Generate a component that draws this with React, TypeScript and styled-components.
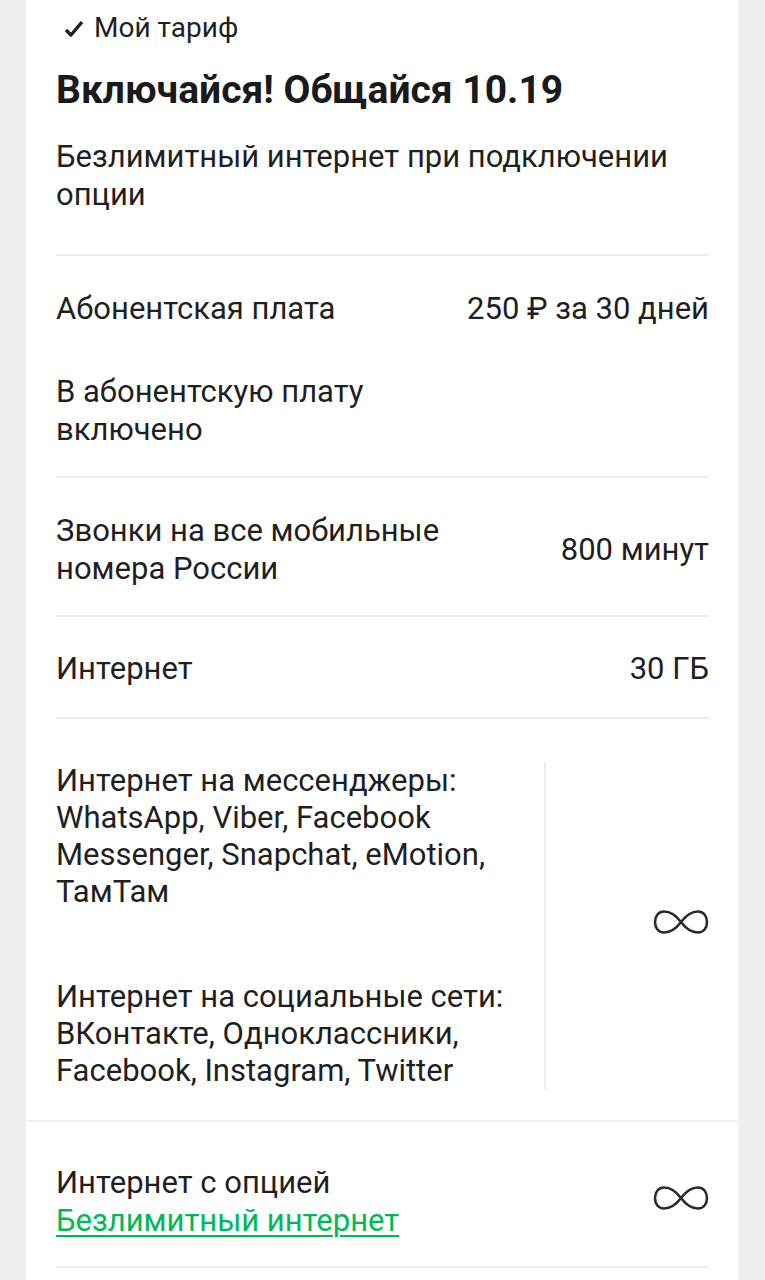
import * as React from 'react';
import styled, { createGlobalStyle } from 'styled-components';

const GlobalStyle = createGlobalStyle`
  html, body {
    margin: 0;
    padding: 0;
    background: #efefef;
  }
  body {
    font-family: Roboto, 'Noto Sans', 'Liberation Sans', sans-serif;
    color: #1f1f1f;
    -webkit-font-smoothing: antialiased;
  }
`;

const Infinity: React.FC = () => (
  <StyledInfinity width='56' height='26' viewBox='0 0 56 26' fill='none'>
    <path
      d='M28 13 C22 5 16 2.5 11 2.5 C5.5 2.5 2 7 2 13 C2 19 5.5 23.5 11 23.5 C16 23.5 22 21 28 13 C34 5 40 2.5 45 2.5 C50.5 2.5 54 7 54 13 C54 19 50.5 23.5 45 23.5 C40 23.5 34 21 28 13 Z'
      stroke='#2b2b2b'
      strokeWidth='2.6'
    />
  </StyledInfinity>
);

const CheckIcon: React.FC = () => (
  <svg width='20' height='18' viewBox='0 0 20 18' fill='none'>
    <path d='M2 10 L7 15 L18 2' stroke='#1f1f1f' strokeWidth='3.4' strokeLinejoin='round' />
  </svg>
);

const App: React.FC = () => {
  return (
    <>
      <GlobalStyle />
      <StyledPage>
        <StyledCard>
          <StyledBadge>
            <CheckIcon />
            <span>Мой тариф</span>
          </StyledBadge>
          <StyledTitle>Включайся! Общайся 10.19</StyledTitle>
          <StyledDescription>
            Безлимитный интернет при подключении опции
          </StyledDescription>

          <StyledDivider />

          <StyledRow padTop={34} padBottom={0}>
            <StyledLabel>Абонентская плата</StyledLabel>
            <StyledValue>250 ₽ за 30 дней</StyledValue>
          </StyledRow>
          <StyledRow padTop={45} padBottom={27}>
            <StyledLabel narrow>В абонентскую плату включено</StyledLabel>
          </StyledRow>

          <StyledDivider />

          <StyledRow padTop={34} padBottom={27}>
            <StyledLabel narrow>Звонки на все мобильные номера России</StyledLabel>
            <StyledValue>800 минут</StyledValue>
          </StyledRow>

          <StyledDivider />

          <StyledRow padTop={33} padBottom={29}>
            <StyledLabel>Интернет</StyledLabel>
            <StyledValue>30 ГБ</StyledValue>
          </StyledRow>

          <StyledDivider />

          <StyledSplitRow>
            <StyledSplitLeft>
              <StyledParagraph>
                Интернет на мессенджеры: WhatsApp, Viber, Facebook Messenger,
                Snapchat, eMotion, ТамТам
              </StyledParagraph>
              <StyledParagraph>
                Интернет на социальные сети: ВКонтакте, Одноклассники,
                Facebook, Instagram, Twitter
              </StyledParagraph>
            </StyledSplitLeft>
            <StyledSplitRight>
              <Infinity />
            </StyledSplitRight>
          </StyledSplitRow>
        </StyledCard>

        <StyledCard>
          <StyledRow padTop={42} padBottom={26}>
            <div>
              <StyledLabel>Интернет с опцией</StyledLabel>
              <StyledLink href='#'>Безлимитный интернет</StyledLink>
            </div>
            <Infinity />
          </StyledRow>
          <StyledDivider />
          <StyledTail />
        </StyledCard>
      </StyledPage>
    </>
  );
};

export default App;

const StyledPage = styled.div`
  width: 712px;
  margin: 0 0 0 26px;
  display: flex;
  flex-direction: column;
  gap: 2px;
`;
const StyledCard = styled.div`
  background: #ffffff;
  padding: 0 29px 0 30px;
`;
const StyledInfinity = styled.svg`
  margin-bottom: 8px;
`;
const StyledBadge = styled.div`
  display: flex;
  align-items: center;
  gap: 10px;
  padding: 9px 0 0 8px;
  height: 38px;
  font-size: 28px;
  line-height: 38px;
  color: #1f1f1f;
  svg {
    margin-top: 1px;
  }
`;
const StyledTitle = styled.h1`
  margin: 20px 0 0;
  font-size: 39px;
  font-weight: 700;
  line-height: 46px;
  color: #1a1a1a;
`;
const StyledDescription = styled.p`
  margin: 25px 0 0;
  max-width: 654px;
  font-size: 31px;
  line-height: 38px;
  padding-bottom: 40px;
`;
const StyledDivider = styled.div`
  height: 2px;
  background: #ededed;
`;
const StyledRow = styled.div<{ padTop: number; padBottom: number }>`
  display: flex;
  align-items: center;
  justify-content: space-between;
  padding: ${(p) => p.padTop}px 0 ${(p) => p.padBottom}px;
`;
const StyledLabel = styled.div<{ narrow?: boolean }>`
  font-size: 31px;
  line-height: 38px;
  max-width: ${(p) => (p.narrow ? '440px' : 'none')};
`;
const StyledValue = styled.div`
  font-size: 31px;
  line-height: 38px;
  text-align: right;
  white-space: nowrap;
`;
const StyledSplitRow = styled.div`
  display: flex;
  padding: 43px 0 31px;
`;
const StyledSplitLeft = styled.div`
  width: 488px;
  display: flex;
  flex-direction: column;
  gap: 68px;
`;
const StyledParagraph = styled.p`
  margin: 0;
  font-size: 31px;
  line-height: 37px;
  max-width: 462px;
`;
const StyledSplitRight = styled.div`
  flex: 1;
  display: flex;
  align-items: center;
  justify-content: flex-end;
  border-left: 2px solid #efefef;
`;
const StyledLink = styled.a`
  display: block;
  font-size: 31px;
  line-height: 38px;
  color: #00b956;
  text-decoration: underline;
  text-underline-offset: 4px;
  text-decoration-thickness: 2px;
`;
const StyledTail = styled.div`
  height: 40px;
`;
